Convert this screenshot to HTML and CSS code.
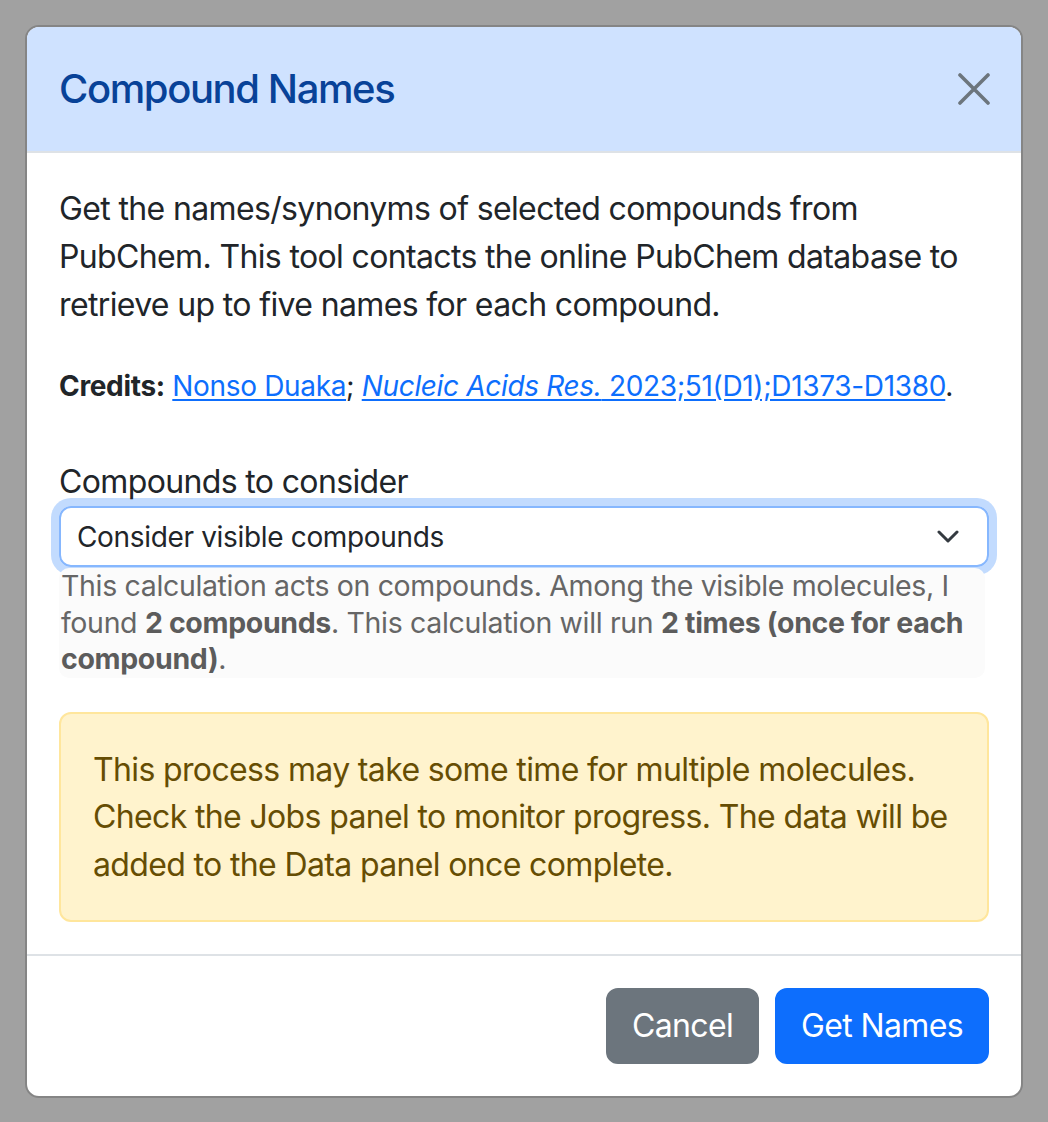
FILE: index.html
```html
<!DOCTYPE html>
<html lang="en">
<head>
<meta charset="utf-8">
<title>Compound Names</title>
<link rel="stylesheet" href="styles.css">
</head>
<body>
<div class="modal">
  <div class="modal-header">
    <h5 class="modal-title">Compound Names</h5>
    <button class="btn-close" type="button" aria-label="Close">
      <svg width="32" height="32" viewBox="0 0 32 32"><path d="M2 2 L30 30 M30 2 L2 30" stroke="#6c757d" stroke-width="3.6" stroke-linecap="round" fill="none"/></svg>
    </button>
  </div>
  <div class="modal-body">
    <p class="intro">Get the names/synonyms of selected compounds from PubChem. This tool contacts the online PubChem database to retrieve up to five names for each compound.</p>
    <p class="credits"><small><b>Credits:</b> <a href="#">Nonso Duaka</a>; <a href="#"><i>Nucleic Acids Res.</i> 2023;51(D1);D1373-D1380</a>.</small></p>
    <div class="form-group">
      <label class="form-label">Compounds to consider</label>
      <div class="select">
        <span>Consider visible compounds</span>
        <svg class="chev" width="22" height="14" viewBox="0 0 22 14"><path d="M2 2 L11 11 L20 2" stroke="#343a40" stroke-width="3" fill="none" stroke-linecap="round" stroke-linejoin="round"/></svg>
      </div>
      <div class="form-text">This calculation acts on compounds. Among the visible molecules, I found <b>2 compounds</b>. This calculation will run <b>2 times (once for each compound)</b>.</div>
    </div>
    <div class="alert">This process may take some time for multiple molecules. Check the Jobs panel to monitor progress. The data will be added to the Data panel once complete.</div>
  </div>
  <div class="modal-footer">
    <button class="btn btn-secondary" type="button">Cancel</button>
    <button class="btn btn-primary" type="button">Get Names</button>
  </div>
</div>
</body>
</html>
```
FILE: styles.css
```css
* { box-sizing: border-box; }
html, body { margin: 0; padding: 0; }
body {
  background: #a1a1a1;
  font-family: Inter, "Noto Sans", "Liberation Sans", sans-serif;
  color: #212529;
  font-size: 32px;
  line-height: 1.5;
  letter-spacing: -0.02em;
}
.modal {
  margin: 25px 0 0 25px;
  width: 998px;
  background: #fff;
  border: 2px solid #858585;
  border-radius: 14px;
  overflow: hidden;
}
.modal-header {
  background: #cfe2ff;
  height: 126px;
  padding: 32px;
  border-bottom: 2px solid #dee2e6;
  display: flex;
  align-items: center;
  justify-content: space-between;
}
.modal-title {
  margin: 0;
  font-size: 40px;
  font-weight: 500;
  line-height: 60px;
  letter-spacing: -0.035em;
  color: #084298;
}
.btn-close {
  background: none;
  border: 0;
  padding: 0;
  width: 32px;
  height: 32px;
  margin-right: -1px;
  display: flex;
}
.modal-body {
  padding: 32px 32px 32px;
}
.intro { margin: 0 0 32px; }
.credits { margin: 0; }
.credits small { font-size: 28px; letter-spacing: -0.012em; }
.credits a { color: #0d6efd; text-decoration: underline; text-underline-offset: 3px; }
.form-group { margin-top: 49px; }
.form-label { display: block; line-height: 48px; }
.select {
  height: 61px;
  border: 2px solid #86b7fe;
  border-radius: 12px;
  box-shadow: 0 0 0 8px rgba(13, 110, 253, 0.25);
  padding: 0 28px 0 16px;
  display: flex;
  align-items: center;
  justify-content: space-between;
  font-size: 28px;
  letter-spacing: -0.012em;
  color: #212529;
}
.chev { display: block; }
.form-text {
  margin-top: 1px;
  padding: 0 4px 0 2px;
  font-size: 28.5px;
  letter-spacing: -0.012em;
  line-height: 36.5px;
  color: #666;
  background: #fbfbfb;
  border-radius: 10px;
  width: 926px;
}
.form-text b { color: #5c5c5c; }
.alert {
  margin-top: 34px;
  padding: 32px;
  background: #fff3cd;
  border: 2px solid #ffe69c;
  border-radius: 12px;
  color: #664d03;
  line-height: 47.5px;
}
.modal-footer {
  border-top: 2px solid #dee2e6;
  display: flex;
  justify-content: flex-end;
  gap: 16px;
  padding: 32px 32px 32px 24px;
}
.btn {
  font-family: inherit;
  font-size: 32px;
  line-height: 48px;
  padding: 12px 24px;
  border: 2px solid transparent;
  border-radius: 12px;
  color: #fff;
  letter-spacing: -0.02em;
}
.btn-secondary { background: #6c757d; border-color: #6c757d; }
.btn-primary { background: #0d6efd; border-color: #0d6efd; }
```
